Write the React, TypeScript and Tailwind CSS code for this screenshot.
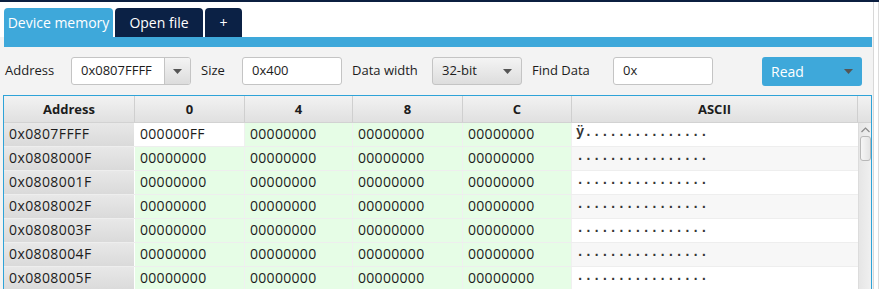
import React from "react";

const rows = [
  { addr: "0x0807FFFF", cells: ["000000FF", "00000000", "00000000", "00000000"], ascii: "ÿ..............." },
  { addr: "0x0808000F", cells: ["00000000", "00000000", "00000000", "00000000"], ascii: "................" },
  { addr: "0x0808001F", cells: ["00000000", "00000000", "00000000", "00000000"], ascii: "................" },
  { addr: "0x0808002F", cells: ["00000000", "00000000", "00000000", "00000000"], ascii: "................" },
  { addr: "0x0808003F", cells: ["00000000", "00000000", "00000000", "00000000"], ascii: "................" },
  { addr: "0x0808004F", cells: ["00000000", "00000000", "00000000", "00000000"], ascii: "................" },
  { addr: "0x0808005F", cells: ["00000000", "00000000", "00000000", "00000000"], ascii: "................" },
];

const cols = ["0", "4", "8", "C"];
const colW = ["w-[110px]", "w-[108px]", "w-[110px]", "w-[109px]"];

function Caret({ className = "" }: { className?: string }) {
  return (
    <svg width="9" height="5" viewBox="0 0 9 5" className={className}>
      <path d="M0 0 L9 0 L4.5 5 Z" fill="#555" />
    </svg>
  );
}

export default function App() {
  return (
    <div
      className="w-[879px] h-[289px] bg-white overflow-hidden flex flex-col text-[13px] text-[#1c1c1c]"
      style={{ fontFamily: '"Open Sans", "Noto Sans", sans-serif' }}
    >
      <div className="h-[2px] bg-[#0b1f40] shrink-0" />
      <div className="flex flex-1 min-h-0">
        <div className="w-[873px] flex flex-col">
          {/* tabs */}
          <div className="bg-white pt-[6px] pl-[4px] flex items-end gap-[2px] h-[35px] shrink-0">
            <div className="h-[29px] w-[109px] bg-[#3ea8da] rounded-t-[4px] text-white text-[14px] flex items-center justify-center">
              Device memory
            </div>
            <div className="h-[29px] w-[88px] bg-[#0b2145] rounded-t-[4px] text-white text-[14px] flex items-center justify-center">
              Open file
            </div>
            <div className="h-[29px] w-[37px] bg-[#0b2145] rounded-t-[4px] text-white text-[14px] flex items-center justify-center">
              +
            </div>
          </div>
          <div className="flex-1 bg-[#f3f3f3] flex flex-col min-h-0">
            <div className="ml-[4px] mr-[1px] h-[10px] bg-[#3ea8da] shrink-0" />
            {/* toolbar */}
            <div className="flex items-center pl-[5px] mt-[10px] h-[28px] shrink-0">
              <span className="w-[66px]">Address</span>
              <div className="w-[120px] h-[28px] flex bg-white border border-[#c4c4c4] rounded-[3px] overflow-hidden">
                <div className="flex-1 flex items-center pl-[9px]">0x0807FFFF</div>
                <div className="w-[26px] border-l border-[#c4c4c4] bg-gradient-to-b from-[#f4f4f4] to-[#dcdcdc] flex items-center justify-center">
                  <Caret />
                </div>
              </div>
              <span className="ml-[10px] w-[41px]">Size</span>
              <div className="w-[100px] h-[28px] bg-white border border-[#c4c4c4] rounded-[3px] flex items-center pl-[9px]">
                0x400
              </div>
              <span className="ml-[10px] w-[80px]">Data width</span>
              <div className="w-[90px] h-[28px] border border-[#c4c4c4] rounded-[3px] bg-gradient-to-b from-[#f4f4f4] to-[#dddddd] flex items-center justify-between pl-[9px] pr-[9px]">
                <span>32-bit</span>
                <Caret />
              </div>
              <span className="ml-[10px] w-[81px]">Find Data</span>
              <div className="w-[100px] h-[28px] bg-white border border-[#c4c4c4] rounded-[3px] flex items-center pl-[9px]">
                0x
              </div>
              <div className="ml-[49px] w-[100px] h-[29px] bg-[#3ea8da] rounded-[3px] flex items-center justify-between pl-[9px] pr-[9px] text-white text-[14px]">
                <span>Read</span>
                <Caret />
              </div>
            </div>
            {/* table */}
            <div className="mt-[10px] ml-[3px] mr-[1px] flex-1 border-t border-l border-r border-[#2ea3d8] bg-white flex flex-col min-h-0 overflow-hidden">
              <div className="flex h-[27px] shrink-0 font-bold bg-gradient-to-b from-[#f2f2f2] to-[#e0e0e0] border-b border-[#d2d2d2]">
                <div className="w-[131px] flex items-center justify-center pt-[2px] border-r border-[#cfcfcf]">Address</div>
                {cols.map((c, i) => (
                  <div key={c} className={`${colW[i]} flex items-center justify-center pt-[2px] border-r border-[#cfcfcf]`}>
                    {c}
                  </div>
                ))}
                <div className="w-[286px] flex items-center justify-center pt-[2px] border-r border-[#cfcfcf]">ASCII</div>
                <div className="flex-1" />
              </div>
              <div className="flex flex-1 min-h-0">
                <div className="flex flex-col">
                  {rows.map((r, ri) => (
                    <div key={r.addr} className="flex h-[24px] shrink-0 border-b border-[#eeeeee]">
                      <div className="w-[131px] bg-gradient-to-b from-[#e8e8e8] to-[#dadada] border-r border-white flex items-center pl-[5px] pb-[3px] text-[14px] tracking-[0.4px]">
                        {r.addr}
                      </div>
                      {r.cells.map((v, ci) => (
                        <div
                          key={ci}
                          className={`${colW[ci]} ${ri === 0 && ci === 0 ? "bg-white" : "bg-[#e6fde6]"} border-r border-[#f0f0f0] flex items-center pl-[5px] pb-[3px] text-[14px] tracking-[0.3px]`}
                        >
                          {v}
                        </div>
                      ))}
                      <div
                        className={`w-[286px] ${ri % 2 === 0 ? "bg-white" : "bg-[#f7f7f7]"} flex items-center pl-[4px] pb-[3px] text-[13.75px] font-bold text-[#333]`}
                        style={{ fontFamily: '"Liberation Mono", monospace' }}
                      >
                        {r.ascii}
                      </div>
                    </div>
                  ))}
                </div>
                {/* scrollbar */}
                <div className="w-[13px] bg-gradient-to-r from-[#e6e6e6] to-[#f0f0f0] border-l border-[#dcdcdc] flex flex-col items-center">
                  <svg width="9" height="6" viewBox="0 0 9 6" className="mt-[4px]">
                    <path d="M0.5 5 L4.5 1 L8.5 5" fill="none" stroke="#8a8a8a" strokeWidth="1.2" />
                  </svg>
                  <div className="mt-[3px] w-[11px] h-[25px] rounded-[3px] border border-[#b8b8b8] bg-gradient-to-r from-[#f6f6f6] to-[#e4e4e4]" />
                </div>
              </div>
            </div>
          </div>
        </div>
        <div className="w-[6px] bg-white border-l border-[#d8d8d8] flex justify-end">
          <div className="w-[1px] bg-[#dcdcdc]" />
        </div>
      </div>
    </div>
  );
}
